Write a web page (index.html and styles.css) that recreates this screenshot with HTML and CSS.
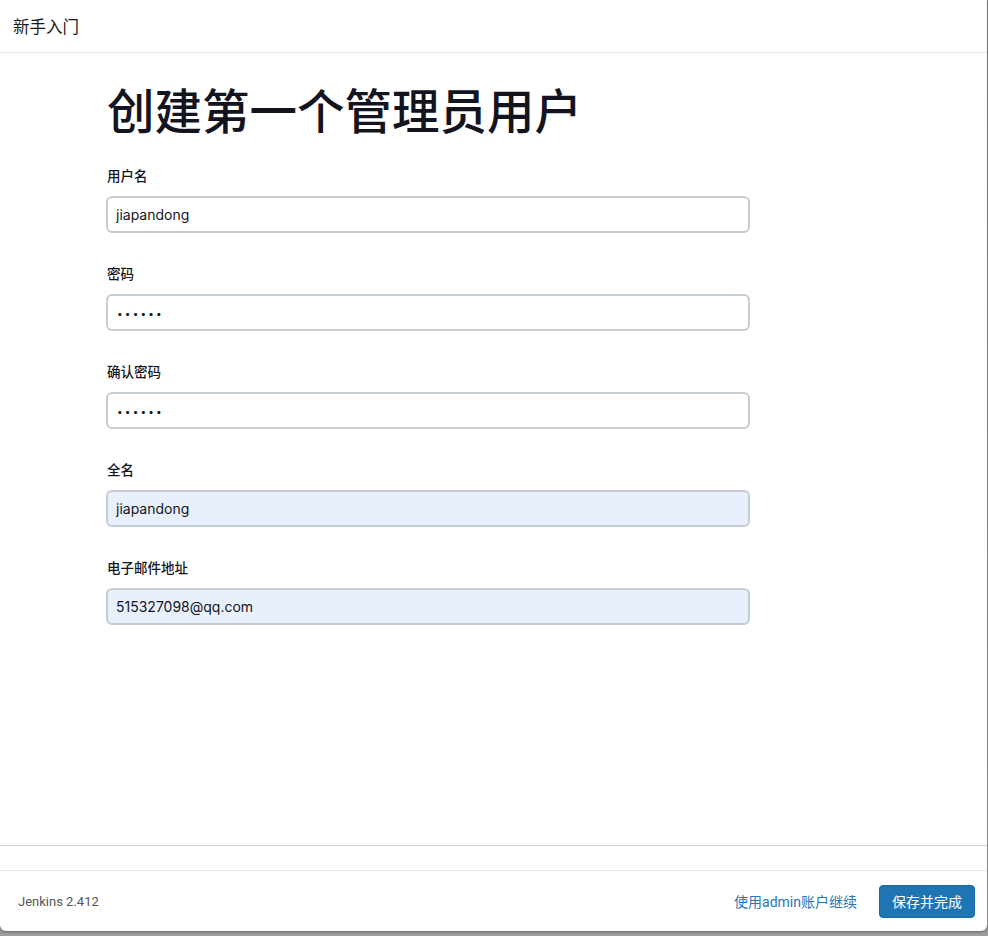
FILE: index.html
```html
<!DOCTYPE html>
<html lang="zh-CN">
<head>
<meta charset="utf-8">
<title>新手入门</title>
<link rel="stylesheet" href="styles.css">
</head>
<body>
<div class="modal">
  <div class="header">新手入门</div>
  <div class="content">
    <h1 class="title">创建第一个管理员用户</h1>
    <form class="form">
      <div class="field">
        <label class="label">用户名</label>
        <input class="input" type="text" value="jiapandong">
      </div>
      <div class="field">
        <label class="label">密码</label>
        <input class="input secret" type="password" value="123456">
      </div>
      <div class="field">
        <label class="label">确认密码</label>
        <input class="input secret" type="password" value="123456">
      </div>
      <div class="field">
        <label class="label">全名</label>
        <input class="input filled" type="text" value="jiapandong">
      </div>
      <div class="field">
        <label class="label">电子邮件地址</label>
        <input class="input filled" type="text" value="515327098@qq.com">
      </div>
    </form>
  </div>
  <div class="spacer"></div>
  <div class="footer">
    <span class="version">Jenkins 2.412</span>
    <div class="actions">
      <a class="link" href="#">使用admin账户继续</a>
      <button class="btn" type="button">保存并完成</button>
    </div>
  </div>
</div>
</body>
</html>
```

FILE: styles.css
```css
html, body {
  margin: 0;
  padding: 0;
}
body {
  width: 988px;
  height: 936px;
  background: linear-gradient(#7a7a7a, #9e9e9e);
  font-family: "Inter", "Noto Sans CJK SC", sans-serif;
  color: #14141f;
  overflow: hidden;
}
.modal {
  width: 987px;
  height: 931px;
  background: #fff;
  border-radius: 0 0 6px 6px;
  display: flex;
  flex-direction: column;
  box-shadow: 0 1px 3px rgba(0,0,0,0.35);
}
.header {
  height: 53px;
  flex: none;
  box-sizing: border-box;
  border-bottom: 1px solid #e3e3e3;
  display: flex;
  align-items: center;
  padding-left: 13px;
  font-size: 16.5px;
  color: #1a1a1a;
}
.content {
  flex: 1;
  padding-left: 107px;
  border-bottom: 1px solid #cfcfcf;
}
.title {
  margin: 31px 0 0 0;
  font-size: 47.5px;
  line-height: 56px;
  font-weight: 500;
  letter-spacing: 0;
  color: #14141f;
}
.form {
  display: flex;
  flex-direction: column;
  gap: 31px;
  margin-top: 26px;
}
.field {
  display: flex;
  flex-direction: column;
  gap: 10px;
}
.label {
  font-size: 13.5px;
  line-height: 20px;
  font-weight: 500;
  color: #14141f;
}
.input {
  width: 644px;
  height: 37px;
  box-sizing: border-box;
  margin-left: -1px;
  border: 2px solid #c5cdd3;
  border-radius: 6px;
  padding: 0 8px;
  font-family: "Inter", "Noto Sans CJK SC", sans-serif;
  font-size: 14px;
  color: #14141f;
  background: #fff;
  outline: none;
}
.input.secret {
  font-size: 10px;
  letter-spacing: 2.2px;
  padding-left: 9px;
}
.input.filled {
  background: #e8f0fe;
}
.spacer {
  height: 24px;
  flex: none;
  border-bottom: 1px solid #e5e5e5;
}
.footer {
  height: 60px;
  flex: none;
  display: flex;
  align-items: center;
  justify-content: space-between;
  padding: 0 12px 0 18px;
}
.version {
  font-size: 13px;
  color: #555;
  font-family: "Roboto", "Noto Sans CJK SC", sans-serif;
}
.actions {
  display: flex;
  align-items: center;
  gap: 22px;
}
.link {
  color: #2677b8;
  text-decoration: none;
  font-size: 14px;
  font-family: "Roboto", "Noto Sans CJK SC", sans-serif;
}
.btn {
  height: 33px;
  width: 96px;
  background: #1f75b3;
  border: 1px solid #1a6aa4;
  border-radius: 4px;
  color: #fff;
  font-size: 14px;
  font-family: "Roboto", "Noto Sans CJK SC", sans-serif;
  padding: 0;
}
```
